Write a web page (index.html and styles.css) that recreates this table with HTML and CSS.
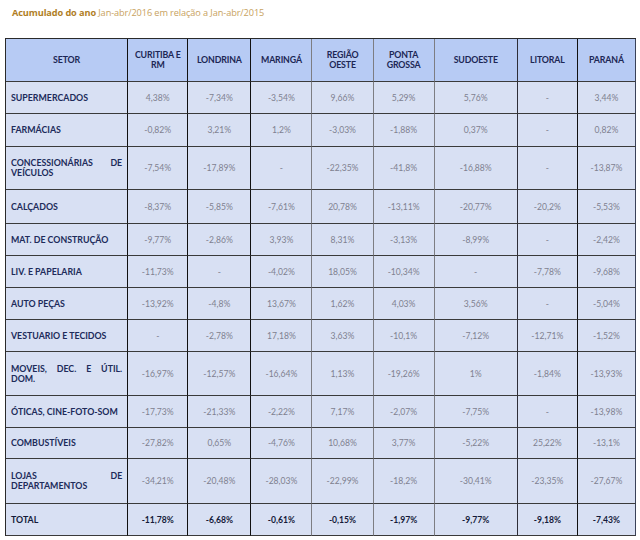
FILE: index.html
```html
<!DOCTYPE html>
<html lang="pt">
<head>
<meta charset="utf-8">
<link rel="stylesheet" href="styles.css">
</head>
<body>
<p class="title"><strong>Acumulado do ano</strong> Jan-abr/2016 em relação a Jan-abr/2015</p>
<table class="grid">
<colgroup>
<col class="c-setor"><col class="c-60"><col class="c-63"><col class="c-61"><col class="c-61"><col class="c-61"><col class="c-83"><col class="c-60"><col class="c-58">
</colgroup>
<thead>
<tr class="h43"><th>SETOR</th><th>CURITIBA E RM</th><th>LONDRINA</th><th>MARINGÁ</th><th>REGIÃO OESTE</th><th>PONTA GROSSA</th><th>SUDOESTE</th><th>LITORAL</th><th>PARANÁ</th></tr>
</thead>
<tbody>
<tr class="h32"><td>SUPERMERCADOS</td><td>4,38%</td><td>-7,34%</td><td>-3,54%</td><td>9,66%</td><td>5,29%</td><td>5,76%</td><td>-</td><td>3,44%</td></tr>
<tr class="h33"><td>FARMÁCIAS</td><td>-0,82%</td><td>3,21%</td><td>1,2%</td><td>-3,03%</td><td>-1,88%</td><td>0,37%</td><td>-</td><td>0,82%</td></tr>
<tr class="h43"><td>CONCESSIONÁRIAS DE VEÍCULOS</td><td>-7,54%</td><td>-17,89%</td><td>-</td><td>-22,35%</td><td>-41,8%</td><td>-16,88%</td><td>-</td><td>-13,87%</td></tr>
<tr class="h34"><td>CALÇADOS</td><td>-8,37%</td><td>-5,85%</td><td>-7,61%</td><td>20,78%</td><td>-13,11%</td><td>-20,77%</td><td>-20,2%</td><td>-5,53%</td></tr>
<tr class="h32"><td>MAT. DE CONSTRUÇÃO</td><td>-9,77%</td><td>-2,86%</td><td>3,93%</td><td>8,31%</td><td>-3,13%</td><td>-8,99%</td><td>-</td><td>-2,42%</td></tr>
<tr class="h32"><td>LIV. E PAPELARIA</td><td>-11,73%</td><td>-</td><td>-4,02%</td><td>18,05%</td><td>-10,34%</td><td>-</td><td>-7,78%</td><td>-9,68%</td></tr>
<tr class="h32"><td>AUTO PEÇAS</td><td>-13,92%</td><td>-4,8%</td><td>13,67%</td><td>1,62%</td><td>4,03%</td><td>3,56%</td><td>-</td><td>-5,04%</td></tr>
<tr class="h32"><td>VESTUARIO E TECIDOS</td><td>-</td><td>-2,78%</td><td>17,18%</td><td>3,63%</td><td>-10,1%</td><td>-7,12%</td><td>-12,71%</td><td>-1,52%</td></tr>
<tr class="h44"><td>MOVEIS, DEC. E ÚTIL. DOM.</td><td>-16,97%</td><td>-12,57%</td><td>-16,64%</td><td>1,13%</td><td>-19,26%</td><td>1%</td><td>-1,84%</td><td>-13,93%</td></tr>
<tr class="h32"><td>ÓTICAS, CINE-FOTO-SOM</td><td>-17,73%</td><td>-21,33%</td><td>-2,22%</td><td>7,17%</td><td>-2,07%</td><td>-7,75%</td><td>-</td><td>-13,98%</td></tr>
<tr class="h31"><td>COMBUSTÍVEIS</td><td>-27,82%</td><td>0,65%</td><td>-4,76%</td><td>10,68%</td><td>3,77%</td><td>-5,22%</td><td>25,22%</td><td>-13,1%</td></tr>
<tr class="h45"><td>LOJAS DE DEPARTAMENTOS</td><td>-34,21%</td><td>-20,48%</td><td>-28,03%</td><td>-22,99%</td><td>-18,2%</td><td>-30,41%</td><td>-23,35%</td><td>-27,67%</td></tr>
<tr class="h32 total"><td>TOTAL</td><td>-11,78%</td><td>-6,68%</td><td>-0,61%</td><td>-0,15%</td><td>-1,97%</td><td>-9,77%</td><td>-9,18%</td><td>-7,43%</td></tr>
</tbody>
</table>
</body>
</html>
```
FILE: styles.css
```css
html, body {
  margin: 0;
  padding: 0;
  background: #ffffff;
}

body {
  font-family: Lato, "Open Sans", sans-serif;
}

.title {
  margin: 0;
  padding: 6px 0 0 12px;
  height: 32px;
  font-family: "Open Sans", sans-serif;
  font-size: 9.2px;
  line-height: 14px;
  color: #c8a25e;
  letter-spacing: -0.1px;
}

.title strong {
  color: #b07e26;
  font-weight: 700;
}

.grid {
  margin-left: 5px;
  border-collapse: separate;
  border-spacing: 0;
  table-layout: fixed;
  width: 631px;
  border-top: 1px solid #2a2a2a;
  border-left: 1px solid #2a2a2a;
}

.c-setor { width: 122px; }
.c-60 { width: 60px; }
.c-63 { width: 63px; }
.c-61 { width: 61px; }
.c-83 { width: 83px; }
.c-58 { width: 58px; }

.grid th,
.grid td {
  border-right: 1px solid #111;
  border-bottom: 1px solid #3a3a3a;
  padding: 0 4px;
  box-sizing: border-box;
  text-align: center;
  vertical-align: middle;
}

.grid th:nth-child(4), .grid td:nth-child(4),
.grid th:nth-child(5), .grid td:nth-child(5),
.grid th:nth-child(6), .grid td:nth-child(6) {
  border-right-color: #7d7d82;
}

.grid th:nth-child(7), .grid td:nth-child(7) {
  border-right-color: #2e2e38;
}

.grid th:nth-child(9), .grid td:nth-child(9) {
  border-right-color: #3a4258;
}

.grid th {
  background: #b7cbf4;
  color: #1c2755;
  font-size: 8.8px;
  font-weight: 700;
  line-height: 10px;
  letter-spacing: -0.15px;
}

.grid td {
  background: #d8e0f3;
  color: #7f8090;
  font-size: 8.6px;
  line-height: 10px;
}

.grid td:first-child {
  text-align: justify;
  text-align-last: left;
  padding: 0 5px 0 5px;
  color: #202b5a;
  font-size: 8.8px;
  font-weight: 700;
  letter-spacing: 0;
}

.grid .total td {
  color: #141a3a;
  font-weight: 700;
}

.h31 { height: 31px; }
.h32 { height: 32px; }
.h33 { height: 33px; }
.h34 { height: 34px; }
.h43 { height: 43px; }
.h44 { height: 44px; }
.h45 { height: 45px; }
```
